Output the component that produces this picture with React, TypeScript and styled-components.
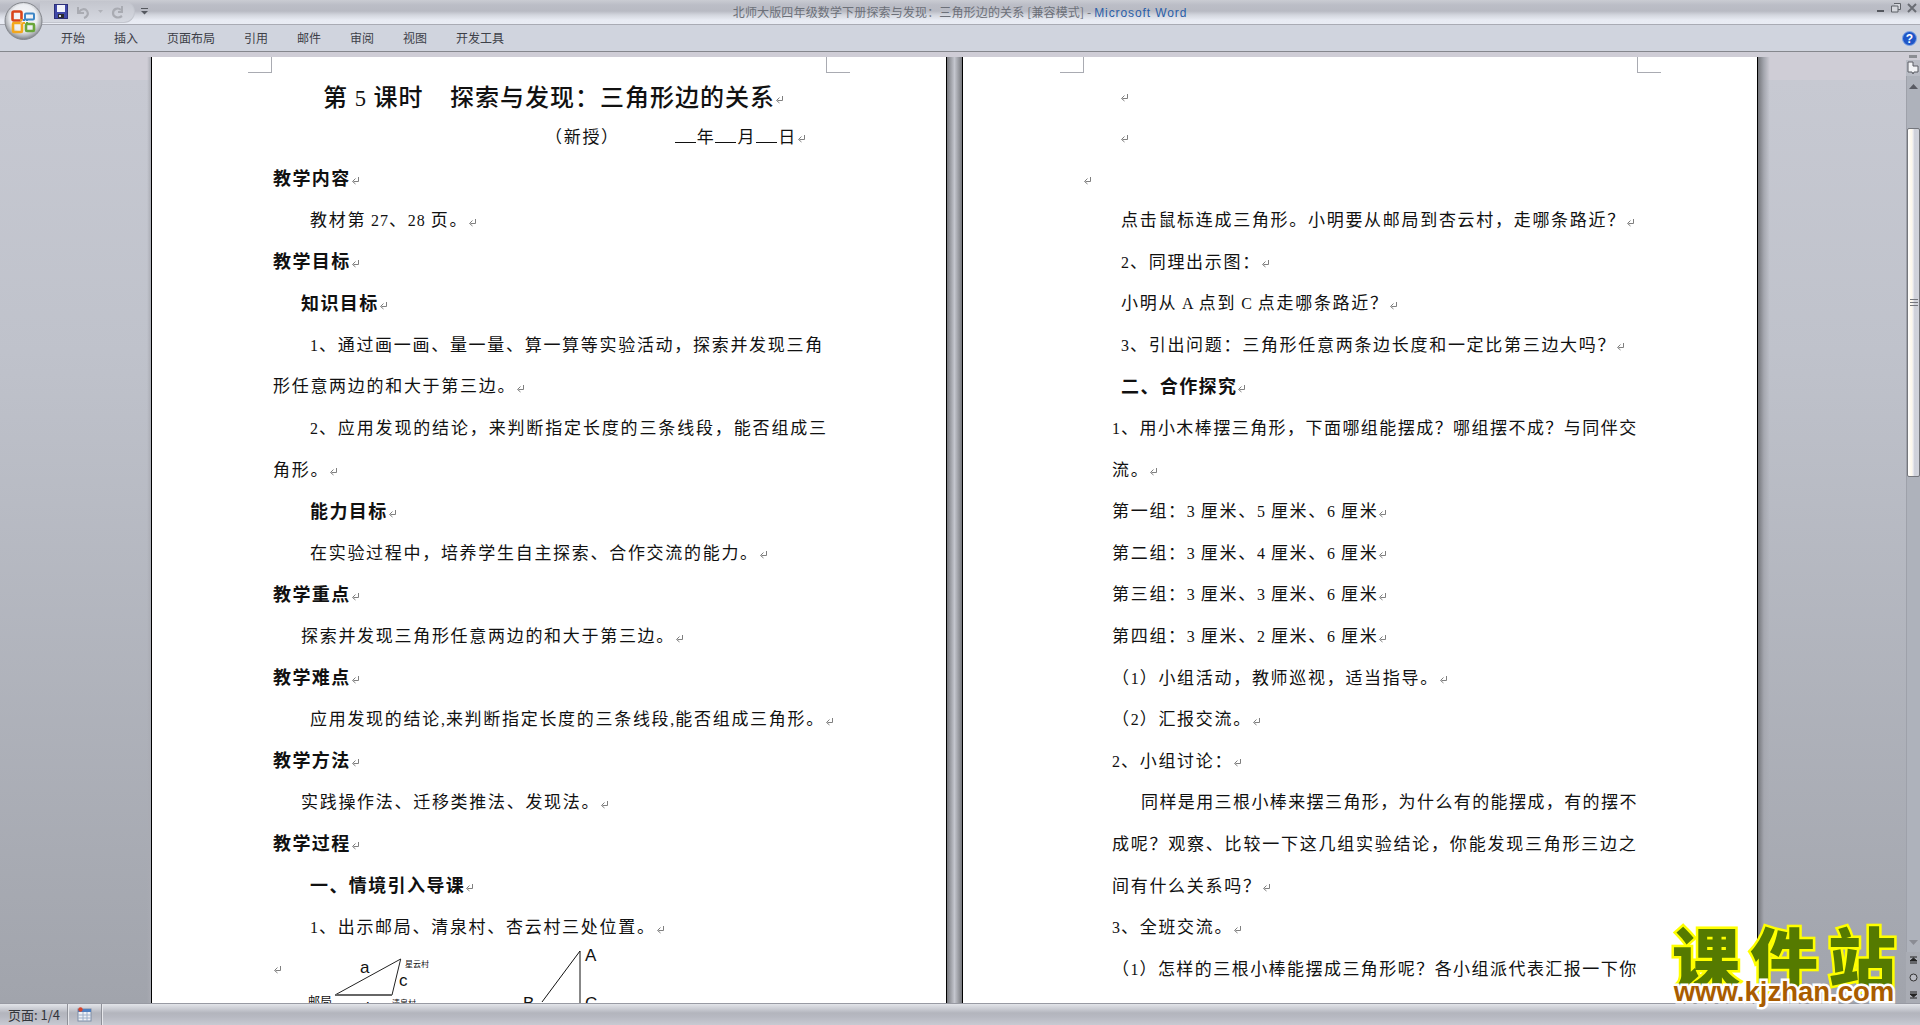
import React from "react";
import styled, { createGlobalStyle } from "styled-components";

const Global = createGlobalStyle`
  html, body { margin: 0; padding: 0; height: 100%; overflow: hidden; background: #c6c8d1; }
  #root { height: 100%; }
`;

const CJK = `"Noto Sans CJK SC", "Liberation Sans", sans-serif`;

const Shell = styled.div`
  position: relative;
  height: 1025px;
  width: 1920px;
  display: flex;
  flex-direction: column;
  overflow: hidden;
  font-family: ${CJK};
`;

/* ---------- Title bar ---------- */
const TitleBar = styled.header`
  height: 24px;
  flex: none;
  display: grid;
  grid-template-columns: 1fr auto 1fr;
  align-items: center;
  border-bottom: 1px solid #a9abb4;
  background: linear-gradient(#caccd3 0, #bbbdc6 5px, #b8bac3 11px, #d3d6de 15px, #e8ebf3 20px, #e9ecf4 24px);
`;
const QuickAccess = styled.div`
  display: flex;
  align-items: center;
  height: 22px;
  width: 95px;
  margin-left: 40px;
  padding-left: 14px;
  box-sizing: border-box;
  gap: 8px;
  border: 1px solid #c3c6ce;
  border-left: none;
  border-top: none;
  border-radius: 0 12px 12px 0;
  background: linear-gradient(#c3c5cd, #d6d9e1);
`;
const QuickMore = styled.svg`
  position: absolute;
  left: 141px;
  top: 8px;
`;
const TitleText = styled.div`
  font-size: 12px;
  line-height: 16px;
  color: #6c7079;
  white-space: pre;
  padding-top: 1px;
  letter-spacing: 0.15px;
`;
const AppName = styled.span`
  color: #2a5ea9;
  font-family: "Liberation Sans", sans-serif;
  letter-spacing: 0.9px;
`;
const WindowButtons = styled.div`
  justify-self: end;
  display: flex;
  align-items: flex-start;
  gap: 6px;
  height: 24px;
  padding: 3px 3px 0 0;
  box-sizing: border-box;
`;

/* ---------- Ribbon ---------- */
const Ribbon = styled.nav`
  height: 27px;
  flex: none;
  display: flex;
  align-items: center;
  gap: 29px;
  padding: 0 3px 0 61px;
  box-sizing: border-box;
  background: #d0d4de;
  border-bottom: 1px solid #85878d;
`;
const Tab = styled.span`
  font-size: 12px;
  color: #3d4048;
  line-height: 14px;
`;
const HelpButton = styled.svg`
  margin-left: auto;
`;
const OfficeButton = styled.svg`
  position: absolute;
  left: 4px;
  top: 2px;
`;

/* ---------- Document ---------- */
const Workspace = styled.main`
  flex: 1;
  min-height: 0;
  display: flex;
  padding-top: 5px;
  background: linear-gradient(#cfcdd6 0, #cfcdd6 28px, #c7c9d2 28px, #bfc2cb 300px, #a1a4ac 100%);
  overflow: hidden;
`;
const Pages = styled.div`
  flex: 1;
  display: flex;
  min-width: 0;
  padding-left: 147px;
`;
const LeftShade = styled.div`
  width: 4px;
  background: linear-gradient(90deg, transparent, #a9abb3);
`;
const RightShade = styled.div`
  width: 12px;
  background: linear-gradient(90deg, #74767b, #a5a7af 50%, transparent);
`;
const Gutter = styled.div`
  width: 15px;
  background: linear-gradient(90deg, #77797e, #c4c6ce 50%, #77797e);
`;
const Page = styled.section`
  position: relative;
  width: 794px;
  flex: none;
  padding-top: 16px;
  background: #fff;
  border-left: 1px solid #000;
  border-right: 1px solid #000;
  overflow: hidden;
`;
const CropMark = styled.i<{ $left: number; $flip?: boolean }>`
  position: absolute;
  top: 0;
  left: ${(p) => p.$left}px;
  width: 23px;
  height: 15px;
  border-bottom: 1px solid #a9abb2;
  ${(p) => (p.$flip ? "border-left: 1px solid #a9abb2;" : "border-right: 1px solid #a9abb2;")}
`;
const Row = styled.div<{ $x: number; $bold?: boolean; $sp?: number }>`
  height: 41.6px;
  display: flex;
  align-items: center;
  padding-left: ${(p) => p.$x}px;
  font-size: ${(p) => (p.$bold ? 18 : 17)}px;
  letter-spacing: ${(p) => p.$sp ?? (p.$bold ? 1.4 : 1.7)}px;
  color: #111;
  white-space: pre;
  font-weight: ${(p) => (p.$bold ? 700 : 400)};
`;
const TitleRow = styled(Row)`
  font-size: 24px;
  letter-spacing: 1px;
  font-weight: 500;
  box-sizing: border-box;
  padding-top: 4px;
`;
const Latin = styled.span`
  font-family: "Liberation Serif", serif;
  letter-spacing: 1px;
  font-size: 0.94em;
`;
const Blank = styled.span`
  display: inline-block;
  width: 21px;
  height: 15px;
  border-bottom: 1px solid #111;
  flex: none;
  margin-right: 1px;
`;
const Mark = styled.svg`
  flex: none;
  margin-top: 6px;
`;
const FigureRow = styled.div`
  display: flex;
  align-items: flex-start;
  padding-left: 121px;
`;
const FigureMark = styled.div`
  margin-top: 12px;
  height: 10px;
  display: flex;
`;

/* ---------- Scrollbar ---------- */
const Scroll = styled.aside`
  width: 14px;
  flex: none;
  display: flex;
  flex-direction: column;
  align-items: stretch;
  margin-top: -2px;
`;
const TopNub = styled.div`
  height: 3px;
  width: 8px;
  margin: 0 0 2px 3px;
  background: #8b8d93;
`;
const RulerButton = styled.svg`
  display: block;
`;
const Track = styled.div`
  flex: 1;
  background: #aeb2bb;
  border-left: 1px solid #9ea1aa;
  display: flex;
  flex-direction: column;
  align-items: stretch;
`;
const ArrowSlot = styled.div`
  height: 20px;
  display: flex;
  align-items: center;
  justify-content: center;
  flex: none;
`;
const Thumb = styled.div`
  height: 349px;
  margin-top: 32px;
  flex: none;
  box-sizing: border-box;
  border: 1px solid #74767c;
  border-radius: 2px;
  background: linear-gradient(90deg, #fff 0, #fdf7ea 35%, #eeeef2 45%, #cfd1da 60%, #d2d4dc 100%);
  display: flex;
  justify-content: center;
  padding-top: 170px;
`;
const Grip = styled.div`
  width: 8px;
  height: 7px;
  background: repeating-linear-gradient(#74767c 0 1px, transparent 1px 3px);
`;
const Spacer = styled.div`
  flex: 1;
`;
const NavSlot = styled.div`
  height: 17px;
  flex: none;
  display: flex;
  align-items: center;
  justify-content: center;
  background: #a9acb4;
  margin-left: -1px;
`;

/* ---------- Status bar ---------- */
const StatusBar = styled.footer`
  height: 22px;
  flex: none;
  display: flex;
  align-items: stretch;
  box-sizing: border-box;
  border-top: 1px solid #989aa3;
  background: linear-gradient(#e2e4e9 0, #c9cbd2 5px, #b3b5bd 9px, #b7b9c2 13px, #c8cad2 21px);
`;
const StatusCell = styled.div<{ $w: number; $pad: number }>`
  width: ${(p) => p.$w}px;
  flex: none;
  box-sizing: border-box;
  display: flex;
  align-items: center;
  padding-left: ${(p) => p.$pad}px;
  border-right: 1px solid #8f9199;
  box-shadow: 1px 0 0 #e6e7eb;
  font-size: 13px;
  color: #33353b;
  white-space: pre;
`;

/* ---------- Watermark ---------- */
const Watermark = styled.div`
  position: absolute;
  left: 1668px;
  top: 926px;
  width: 232px;
  display: flex;
  flex-direction: column;
  align-items: center;
`;
const WmTitle = styled.div`
  font-family: ${CJK};
  font-weight: 900;
  font-size: 68px;
  line-height: 60px;
  letter-spacing: 10px;
  margin-right: -10px;
  color: #557a00;
  -webkit-text-stroke: 5px #ffff00;
  paint-order: stroke fill;
  white-space: nowrap;
`;
const WmUrl = styled.div`
  font-family: "Liberation Sans", sans-serif;
  font-weight: 700;
  font-size: 27.5px;
  line-height: 26px;
  margin-top: -7px;
  color: #a95c00;
  -webkit-text-stroke: 5px #fff;
  paint-order: stroke fill;
  white-space: nowrap;
`;

/* ---------- Small drawings ---------- */
const ParaMark = () => (
  <Mark width="10" height="10" viewBox="0 0 10 10">
    <path d="M7.5 2v4.5H2.5" fill="none" stroke="#7f7f7f" strokeWidth="1" />
    <path d="M4.5 3.5 1.5 6.5 4.5 9" fill="none" stroke="#7f7f7f" strokeWidth="1" />
  </Mark>
);

const Rich = ({ text }: { text: string }) => (
  <span>
    {text.split(/([ -~]+)/).map((part, i) =>
      /^[ -~]+$/.test(part) ? <Latin key={i}>{part}</Latin> : part
    )}
  </span>
);

type Line = { x: number; t: string; b?: boolean; n?: boolean; s?: number };

const page1: Line[] = [
  { x: 121, t: "教学内容", b: true },
  { x: 158, t: "教材第 27、28 页。" },
  { x: 121, t: "教学目标", b: true },
  { x: 149, t: "知识目标", b: true },
  { x: 158, t: "1、通过画一画、量一量、算一算等实验活动，探索并发现三角", n: true },
  { x: 121, t: "形任意两边的和大于第三边。" },
  { x: 158, t: "2、应用发现的结论，来判断指定长度的三条线段，能否组成三", n: true, s: 1.85 },
  { x: 121, t: "角形。" },
  { x: 158, t: "能力目标", b: true },
  { x: 158, t: "在实验过程中，培养学生自主探索、合作交流的能力。" },
  { x: 121, t: "教学重点", b: true },
  { x: 149, t: "探索并发现三角形任意两边的和大于第三边。" },
  { x: 121, t: "教学难点", b: true },
  { x: 158, t: "应用发现的结论,来判断指定长度的三条线段,能否组成三角形。" },
  { x: 121, t: "教学方法", b: true },
  { x: 149, t: "实践操作法、迁移类推法、发现法。" },
  { x: 121, t: "教学过程", b: true },
  { x: 158, t: "一、情境引入导课", b: true },
  { x: 158, t: "1、出示邮局、清泉村、杏云村三处位置。" },
];

const page2: Line[] = [
  { x: 157, t: "" },
  { x: 157, t: "" },
  { x: 120, t: "" },
  { x: 158, t: "点击鼠标连成三角形。小明要从邮局到杏云村，走哪条路近？" },
  { x: 158, t: "2、同理出示图：" },
  { x: 158, t: "小明从 A 点到 C 点走哪条路近？" },
  { x: 158, t: "3、引出问题：三角形任意两条边长度和一定比第三边大吗？" },
  { x: 158, t: "二、合作探究", b: true },
  { x: 149, t: "1、用小木棒摆三角形，下面哪组能摆成？哪组摆不成？与同伴交", n: true, s: 1.45 },
  { x: 149, t: "流。" },
  { x: 149, t: "第一组：3 厘米、5 厘米、6 厘米" },
  { x: 149, t: "第二组：3 厘米、4 厘米、6 厘米" },
  { x: 149, t: "第三组：3 厘米、3 厘米、6 厘米" },
  { x: 149, t: "第四组：3 厘米、2 厘米、6 厘米" },
  { x: 149, t: "（1）小组活动，教师巡视，适当指导。" },
  { x: 149, t: "（2）汇报交流。" },
  { x: 149, t: "2、小组讨论：" },
  { x: 178, t: "同样是用三根小棒来摆三角形，为什么有的能摆成，有的摆不", n: true, s: 1.4 },
  { x: 149, t: "成呢？观察、比较一下这几组实验结论，你能发现三角形三边之", n: true, s: 1.77 },
  { x: 149, t: "间有什么关系吗？" },
  { x: 149, t: "3、全班交流。" },
  { x: 149, t: "（1）怎样的三根小棒能摆成三角形呢？各小组派代表汇报一下你", n: true, s: 1.45 },
];

const Lines = ({ rows }: { rows: Line[] }) => (
  <>
    {rows.map((r, i) => (
      <Row key={i} $x={r.x} $bold={r.b} $sp={r.s}>
        {r.t && <Rich text={r.t} />}
        {!r.n && <ParaMark />}
      </Row>
    ))}
  </>
);

const TriangleFigure = () => (
  <svg width="340" height="72" viewBox="0 0 340 72" fontFamily={`"Liberation Sans", sans-serif`}>
    <path d="M52 49 117.7 13 109 49Z" fill="none" stroke="#222" strokeWidth="1" />
    <path d="M52 49H109" stroke="#666" strokeWidth="2" />
    <text x="77" y="27" fontSize="17" fill="#111">a</text>
    <text x="116" y="40" fontSize="17" fill="#111">c</text>
    <text x="122" y="21" fontSize="8" fill="#111" fontFamily={CJK}>星云村</text>
    <text x="25" y="60" fontSize="12" fill="#111" fontFamily={CJK}>邮局</text>
    <text x="109" y="60" fontSize="8" fill="#111" fontFamily={CJK}>清泉村</text>
    <text x="83" y="68" fontSize="16" fill="#111">b</text>
    <path d="M297 5V72M297 5 259 56" fill="none" stroke="#111" strokeWidth="1" />
    <text x="302" y="15" fontSize="17" fill="#111">A</text>
    <text x="240" y="63" fontSize="17" fill="#111">B</text>
    <text x="302" y="63" fontSize="17" fill="#111">C</text>
  </svg>
);

const OfficeLogo = () => (
  <OfficeButton width="40" height="40" viewBox="0 0 40 40">
    <defs>
      <radialGradient id="orb" cx="50%" cy="42%" r="58%">
        <stop offset="0" stopColor="#f9f9fb" />
        <stop offset="0.62" stopColor="#eceef2" />
        <stop offset="0.85" stopColor="#aeb1b6" />
        <stop offset="1" stopColor="#7d8086" />
      </radialGradient>
    </defs>
    <circle cx="19.5" cy="19" r="18.5" fill="url(#orb)" stroke="#84878d" />
    <rect x="8.5" y="9.5" width="9" height="9" rx="1.5" fill="none" stroke="#d9441a" strokeWidth="2.6" />
    <rect x="21" y="11.5" width="9" height="6" rx="1" fill="none" stroke="#3d86c6" strokeWidth="2" />
    <rect x="9" y="21" width="9" height="9" rx="1" fill="none" stroke="#f3a71d" strokeWidth="2.6" />
    <rect x="22" y="22" width="8" height="7" rx="1" fill="none" stroke="#69a63a" strokeWidth="2.6" />
    <rect x="16" y="17" width="2" height="2" fill="#e8a020" />
    <rect x="19" y="17" width="2" height="2" fill="#3d86c6" />
    <rect x="22" y="17" width="2" height="2" fill="#3d86c6" />
    <rect x="19" y="20" width="2" height="2" fill="#f3a71d" />
    <rect x="16" y="20" width="2" height="2" fill="#f3c05d" />
    <rect x="22" y="20" width="2" height="2" fill="#69a63a" />
  </OfficeButton>
);

const SaveIcon = () => (
  <svg width="14" height="15" viewBox="0 0 14 15">
    <rect x="0.5" y="0.5" width="13" height="14" fill="#3f48a8" stroke="#2c2f78" />
    <rect x="3" y="1" width="8" height="7" fill="#f1f3fb" />
    <rect x="4" y="10" width="6" height="4" fill="#2a2a2e" />
    <rect x="5" y="11" width="2" height="2" fill="#d9dbe3" />
  </svg>
);
const UndoIcon = () => (
  <svg width="14" height="14" viewBox="0 0 14 14">
    <path d="M2 2v6h6" fill="none" stroke="#a9abb2" strokeWidth="2" />
    <path d="M3 7c2-3 6-4 8-1s0 6-3 7" fill="none" stroke="#a9abb2" strokeWidth="2.2" />
  </svg>
);
const SmallCaret = () => (
  <svg width="5" height="3" viewBox="0 0 5 3">
    <path d="M0 0h5L2.5 3z" fill="#b0b2b9" />
  </svg>
);
const RedoIcon = () => (
  <svg width="14" height="14" viewBox="0 0 14 14">
    <path d="M11 1v6H7" fill="none" stroke="#a9abb2" strokeWidth="2" />
    <path d="M10 5C7 2 2 4 2 8s5 6 9 3" fill="none" stroke="#a9abb2" strokeWidth="2.2" />
  </svg>
);

const Up = () => (
  <svg width="9" height="5" viewBox="0 0 9 5">
    <path d="M4.5 0 9 5H0z" fill="#595b63" />
  </svg>
);
const Down = () => (
  <svg width="9" height="5" viewBox="0 0 9 5">
    <path d="M4.5 5 9 0H0z" fill="#8a8c94" />
  </svg>
);

export default function App() {
  return (
    <Shell>
      <Global />
      <TitleBar>
        <QuickAccess>
          <SaveIcon />
          <UndoIcon />
          <SmallCaret />
          <RedoIcon />
        </QuickAccess>
        <TitleText>
          北师大版四年级数学下册探索与发现：三角形边的关系 [兼容模式] - <AppName>Microsoft Word</AppName>
        </TitleText>
        <WindowButtons>
          <svg width="9" height="10" viewBox="0 0 9 10">
            <rect x="1" y="7" width="7" height="2" fill="#55585f" />
          </svg>
          <svg width="10" height="10" viewBox="0 0 10 10">
            <path d="M3 .5h6.5v6H7M.5 3H7v6H.5z" fill="#d5d7dd" stroke="#5f6268" />
          </svg>
          <svg width="10" height="10" viewBox="0 0 10 10">
            <path d="M1 1l8 8M9 1 1 9" stroke="#6a6d74" strokeWidth="2" />
          </svg>
        </WindowButtons>
      </TitleBar>
      <QuickMore width="7" height="7" viewBox="0 0 7 7">
        <rect x="0" y="0" width="7" height="1" fill="#55585f" />
        <path d="M0 3h7L3.5 6.5z" fill="#55585f" />
      </QuickMore>
      <Ribbon>
        {["开始", "插入", "页面布局", "引用", "邮件", "审阅", "视图", "开发工具"].map((t) => (
          <Tab key={t}>{t}</Tab>
        ))}
        <HelpButton width="15" height="15" viewBox="0 0 15 15">
          <circle cx="7.5" cy="7.5" r="7" fill="#1f56c8" stroke="#7fa6e6" />
          <text x="7.5" y="12" textAnchor="middle" fontSize="12" fontWeight="700" fill="#fff" fontFamily="Liberation Sans">?</text>
        </HelpButton>
      </Ribbon>
      <OfficeLogo />
      <Workspace>
        <Pages>
          <LeftShade />
          <Page>
            <CropMark $left={96} />
            <CropMark $left={674} $flip />
            <TitleRow $x={171}>
              <Rich text="第 5 课时    探索与发现：三角形边的关系" />
              <ParaMark />
            </TitleRow>
            <Row $x={393}>
              <Rich text="（新授）           " />
              <Blank />年<Blank />月<Blank />日
              <ParaMark />
            </Row>
            <Lines rows={page1} />
            <FigureRow>
              <FigureMark>
                <ParaMark />
              </FigureMark>
              <TriangleFigure />
            </FigureRow>
          </Page>
          <Gutter />
          <Page>
            <CropMark $left={97} />
            <CropMark $left={674} $flip />
            <Lines rows={page2} />
          </Page>
          <RightShade />
        </Pages>
        <Scroll>
          <TopNub />
          <RulerButton width="14" height="16" viewBox="0 0 14 16">
            <rect width="14" height="16" fill="#b9bcc5" />
            <path d="M2 2h5v4h5v6H8l-1 2-1-2H2z" fill="#f2f3f6" stroke="#5b5d64" />
          </RulerButton>
          <Track>
            <ArrowSlot>
              <Up />
            </ArrowSlot>
            <Thumb>
              <Grip />
            </Thumb>
            <Spacer />
            <ArrowSlot>
              <Down />
            </ArrowSlot>
            <NavSlot>
              <svg width="9" height="9" viewBox="0 0 9 9">
                <path d="M1 1h7M4.5 2 8 5H1zM1 7h7" stroke="#222" fill="#222" />
              </svg>
            </NavSlot>
            <NavSlot>
              <svg width="9" height="9" viewBox="0 0 9 9">
                <circle cx="4.5" cy="4.5" r="3.5" fill="#b9bbc3" stroke="#333" />
              </svg>
            </NavSlot>
            <NavSlot>
              <svg width="9" height="9" viewBox="0 0 9 9">
                <path d="M1 2h7M4.5 7 8 4H1zM1 8h7" stroke="#222" fill="#222" />
              </svg>
            </NavSlot>
          </Track>
        </Scroll>
      </Workspace>
      <StatusBar>
        <StatusCell $w={68} $pad={8}>页面: 1/4</StatusCell>
        <StatusCell $w={34} $pad={9}>
          <svg width="15" height="15" viewBox="0 0 15 15">
            <rect x="1" y="2" width="13" height="12" fill="#eef1f6" stroke="#7f8da6" />
            <rect x="1" y="2" width="13" height="3" fill="#4f7fc0" />
            <path d="M1 8h13M1 11h13M6 5v9M10 5v9" stroke="#9eb0c9" />
            <circle cx="3.5" cy="2.5" r="2.2" fill="#d7432a" />
          </svg>
        </StatusCell>
      </StatusBar>
      <Watermark>
        <WmTitle>课件站</WmTitle>
        <WmUrl>www.kjzhan.com</WmUrl>
      </Watermark>
    </Shell>
  );
}
